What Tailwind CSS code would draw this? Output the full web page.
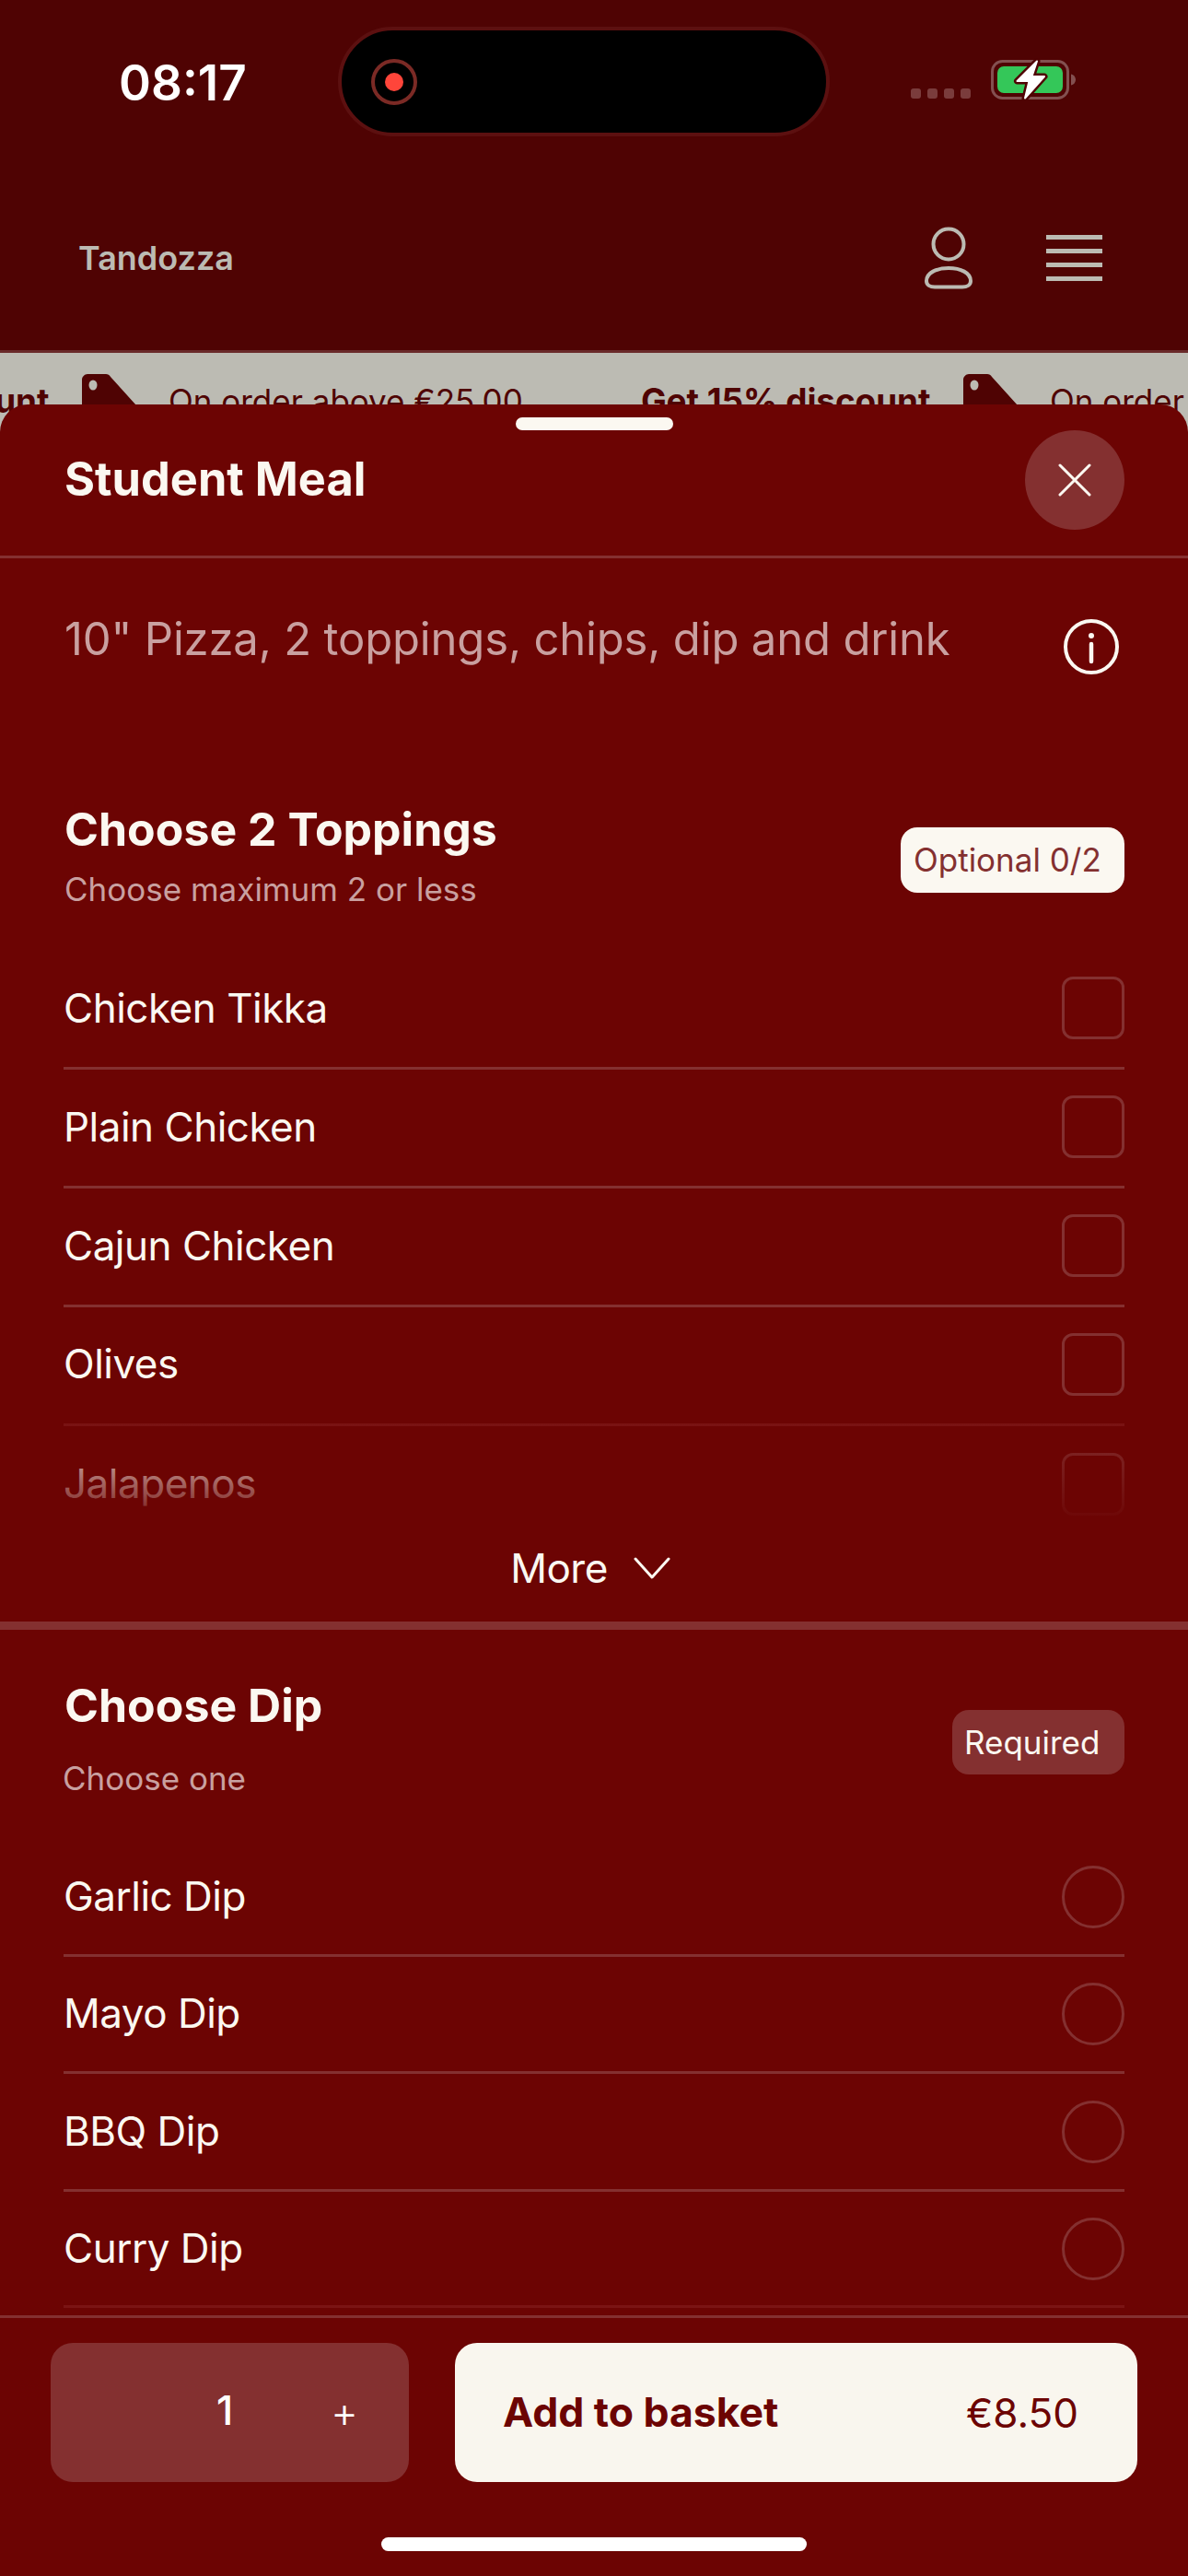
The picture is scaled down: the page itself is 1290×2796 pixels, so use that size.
<!DOCTYPE html>
<html lang="en">
  <head>
    <meta charset="UTF-8" />
    <meta name="viewport" content="width=device-width, initial-scale=1.0" />
    <title>Tandozza</title>
    <script src="https://cdn.jsdelivr.net/npm/@tailwindcss/browser@4"></script>
  </head>
  <body class="bg-[#4f0303] [font-family:Inter,sans-serif]">
    <div class="relative w-[1290px] h-[2796px] overflow-hidden">
      <!-- status bar -->
      <div class="relative h-[176px]">
        <span class="absolute left-[129px] top-[58px] text-[53px] leading-[64px] font-semibold text-white">08:17</span>
        <div class="absolute left-[367px] top-[29px] w-[534px] h-[119px] rounded-full bg-black border-4 border-[#5c1010] flex items-center pl-[32px]">
          <div class="w-[50px] h-[50px] rounded-full border-[4px] border-[#7b2a25] flex items-center justify-center">
            <div class="w-[20px] h-[20px] rounded-full bg-[#ff453a]"></div>
          </div>
        </div>
        <div class="absolute left-[989px] top-[96px] flex gap-[7px]">
          <div class="w-[11px] h-[11px] rounded-[3px] bg-[#7a3c3c]"></div>
          <div class="w-[11px] h-[11px] rounded-[3px] bg-[#7a3c3c]"></div>
          <div class="w-[11px] h-[11px] rounded-[3px] bg-[#7a3c3c]"></div>
          <div class="w-[11px] h-[11px] rounded-[3px] bg-[#7a3c3c]"></div>
        </div>
        <svg class="absolute left-[1074px] top-[62px]" width="98" height="50" viewBox="0 0 98 50">
          <rect x="3.5" y="4.500" width="82" height="40" rx="11" fill="none" stroke="#835050" stroke-width="3"/>
          <rect x="9" y="10" width="71" height="29" rx="7" fill="#34c759"/>
          <path d="M89 18.500c3 .6 5 3 5 6s-2 5.400-5 6z" fill="#835050"/>
          <path d="M52 4.500 30.500 26h13L39 44.500 60 21H46.500z" fill="#fff" stroke="#4f0303" stroke-width="7" stroke-linejoin="round"/>
          <path d="M52 4.500 30.500 26h13L39 44.500 60 21H46.500z" fill="#fff" stroke="#fff" stroke-width="2" stroke-linejoin="round"/>
        </svg>
      </div>

      <!-- site header -->
      <header class="h-[207px] border-b-[3px] border-[#6a2a2a] pt-[3px] pl-[85px] pr-[93px] flex items-center justify-between">
        <span class="text-[36px] font-semibold text-[#bcbbb3]">Tandozza</span>
        <div class="flex items-center gap-[78px]">
          <svg width="56" height="68" viewBox="0 0 56 68" fill="none" stroke="#bcbbb3" stroke-width="4">
            <circle cx="28" cy="19" r="16.500"/>
            <path d="M13 65.500h30c5 0 9-2 9-6.500C52 50 41 45 28 45S4 50 4 59c0 4.500 4 6.500 9 6.500z"/>
          </svg>
          <div class="flex flex-col gap-[10px] w-[61px]">
            <div class="h-[5px] bg-[#bcbbb3]"></div>
            <div class="h-[5px] bg-[#bcbbb3]"></div>
            <div class="h-[5px] bg-[#bcbbb3]"></div>
            <div class="h-[5px] bg-[#bcbbb3]"></div>
          </div>
        </div>
      </header>

      <!-- offer strip, mostly covered by the sheet -->
      <div class="h-[120px] bg-[#bcbbb3] flex items-start pt-[30px] text-[35px] leading-[44px] text-[#4f0303] whitespace-nowrap overflow-hidden">
        <span class="font-bold text-[36.800px] ml-[-261px] w-[314px] shrink-0 text-right">Get 15% discount</span>
        <svg class="ml-[36px] mt-[-7px] shrink-0" width="62" height="62" viewBox="0 0 62 62"><path d="M6 0h20c2 0 4 1 5 3l28 31c2 3 2 6-1 8L39 62H8c-4 0-8-4-8-8V6c0-3 3-6 6-6z" fill="#4f0303"/><ellipse cx="12" cy="12" rx="4.500" ry="5.500" fill="#bcbbb3"/></svg>
        <span class="ml-[32px] w-[513px] shrink-0">On order above €25.00</span>
        <span class="font-bold text-[36.800px] w-[314px] shrink-0">Get 15% discount</span>
        <svg class="ml-[36px] mt-[-7px] shrink-0" width="62" height="62" viewBox="0 0 62 62"><path d="M6 0h20c2 0 4 1 5 3l28 31c2 3 2 6-1 8L39 62H8c-4 0-8-4-8-8V6c0-3 3-6 6-6z" fill="#4f0303"/><ellipse cx="12" cy="12" rx="4.500" ry="5.500" fill="#bcbbb3"/></svg>
        <span class="ml-[32px] shrink-0">On order above €25.00</span>
      </div>

      <!-- bottom sheet -->
      <section class="absolute inset-x-0 top-[439px] bottom-0 bg-[#6c0403] rounded-t-[30px] text-[#fbf8f1] flex flex-col">
        <div class="absolute left-[560px] top-[14px] w-[171px] h-[14px] rounded-full bg-[#fbf8f1]"></div>

        <div class="h-[167px] shrink-0 border-b-[3px] border-[#843030] pl-[70px] pr-[69px] flex items-center justify-between">
          <h1 class="text-[50.500px] font-bold leading-[60px] -mt-[2px]">Student Meal</h1>
          <button class="w-[108px] h-[108px] rounded-full bg-[#843030] flex items-center justify-center">
            <svg width="36" height="36" viewBox="0 0 36 36" stroke="#fbf8f1" stroke-width="3" stroke-linecap="round"><path d="M2 2l32 32M34 2 2 34"/></svg>
          </button>
        </div>

        <div class="h-[241px] shrink-0 pl-[70px] pr-[75px] pt-[58px] flex items-start justify-between">
          <p class="text-[49px] leading-[60px] tracking-[-0.17px] text-[#c9a0a0]">10" Pizza, 2 toppings, chips, dip and drink</p>
          <svg class="mt-[8px]" width="60" height="60" viewBox="0 0 60 60" fill="none" stroke="#fbf8f1" stroke-width="4" stroke-linecap="round">
            <circle cx="30" cy="30" r="28"/>
            <path d="M30 27v19" stroke-width="4.500"/>
            <circle cx="30" cy="18" r="3" fill="#fbf8f1" stroke="none"/>
          </svg>
        </div>

        <div class="h-[185px] shrink-0 px-[69px] flex items-start justify-between">
          <div class="pl-[1px] pt-[23px]">
            <h2 class="text-[50px] leading-[60px] font-bold">Choose 2 Toppings</h2>
            <p class="text-[35px] leading-[44px] mt-[13px] text-[#c9a0a0]">Choose maximum 2 or less</p>
          </div>
          <span class="mt-[51px] h-[71px] w-[243px] rounded-[18px] bg-[#fbf8f1] text-[#843030] text-[35px] pl-[14px] flex items-center">Optional 0/2</span>
        </div>

        <div class="relative h-[614px] shrink-0 overflow-hidden">
          <ul class="mx-[69px] text-[44px] tracking-[-0.5px]">
            <li class="h-[129px] border-b-[3px] border-[#843030] flex items-center justify-between pb-[3px]">Chicken Tikka<span class="w-[68px] h-[68px] rounded-[12px] border-[3px] border-[#843030]"></span></li>
            <li class="h-[129px] border-b-[3px] border-[#843030] flex items-center justify-between pb-[3px]">Plain Chicken<span class="w-[68px] h-[68px] mt-[1px] rounded-[12px] border-[3px] border-[#843030]"></span></li>
            <li class="h-[129px] border-b-[3px] border-[#843030] flex items-center justify-between pb-[3px]">Cajun Chicken<span class="w-[68px] h-[68px] rounded-[12px] border-[3px] border-[#843030]"></span></li>
            <li class="h-[129px] border-b-[3px] border-[#7a1414] flex items-center justify-between pb-[5px]">Olives<span class="w-[68px] h-[68px] mt-[2px] rounded-[12px] border-[3px] border-[#843030]"></span></li>
            <li class="h-[129px] flex items-center justify-between pb-[5px]">Jalapenos<span class="w-[68px] h-[68px] mt-[2px] rounded-[12px] border-[3px] border-[#843030]"></span></li>
          </ul>
          <div class="absolute inset-x-0 bottom-0 h-[110px] bg-gradient-to-b from-[#6c0403]/0 to-[#6c0403]/90"></div>
        </div>
        <div class="h-[123px] shrink-0 flex items-center justify-center gap-[28px] pr-[8px] pb-[3px] text-[44px] tracking-[-0.5px] border-b-[9px] border-[#843030]">
          More
          <svg width="40" height="26" viewBox="0 0 40 26" fill="none" stroke="#fbf8f1" stroke-width="3" stroke-linecap="round" stroke-linejoin="round"><path d="M2 3l18 20L38 3"/></svg>
        </div>

        <div class="h-[228px] shrink-0 px-[69px] flex items-start justify-between">
          <div class="pt-[52px]">
            <h2 class="text-[50px] leading-[60px] font-bold pl-[1px]">Choose Dip</h2>
            <p class="text-[35px] leading-[44px] mt-[27px] -ml-[1px] text-[#c9a0a0]">Choose one</p>
          </div>
          <span class="mt-[87px] h-[70px] w-[187px] rounded-[18px] bg-[#843030] text-[35px] pl-[13px] flex items-center">Required</span>
        </div>

        <ul class="mx-[69px] text-[44px] tracking-[-0.5px]">
          <li class="h-[127px] border-b-[3px] border-[#843030] flex items-center justify-between"><span class="-mt-[2px]">Garlic Dip</span><span class="w-[68px] h-[68px] rounded-full border-[3px] border-[#843030]"></span></li>
          <li class="h-[127px] border-b-[3px] border-[#843030] flex items-center justify-between"><span class="-mt-[2px]">Mayo Dip</span><span class="w-[68px] h-[68px] rounded-full border-[3px] border-[#843030]"></span></li>
          <li class="h-[128px] border-b-[3px] border-[#843030] flex items-center justify-between"><span class="-mt-[2px]">BBQ Dip</span><span class="w-[68px] h-[68px] rounded-full border-[3px] border-[#843030]"></span></li>
          <li class="h-[126px] border-b-[3px] border-[#7a1414] flex items-center justify-between"><span class="-mt-[2px]">Curry Dip</span><span class="w-[68px] h-[68px] rounded-full border-[3px] border-[#843030]"></span></li>
        </ul>

        <!-- footer actions -->
        <div class="absolute inset-x-0 bottom-0 h-[283px] bg-[#6c0403] border-t-[3px] border-[#843030] pt-[27px] pl-[55px] pr-[55px]">
          <div class="flex gap-[50px]">
            <div class="w-[389px] h-[151px] rounded-[24px] bg-[#843030] relative text-white">
              <span class="absolute left-[180px] top-[46px] text-[44px] leading-[54px] font-medium">1</span>
              <span class="absolute left-[304px] top-[48px] text-[46px] leading-[54px] font-light">+</span>
            </div>
            <button class="w-[741px] h-[151px] rounded-[24px] bg-[#f9f6ee] text-[#6c0403] pl-[52px] pr-[64px] flex items-center justify-between">
              <span class="font-bold text-[44.500px]">Add to basket</span>
              <span class="text-[44px]">€8.50</span>
            </button>
          </div>
          <div class="mx-auto mt-[60px] w-[462px] h-[15px] rounded-full bg-white"></div>
        </div>
      </section>
    </div>
  </body>
</html>
